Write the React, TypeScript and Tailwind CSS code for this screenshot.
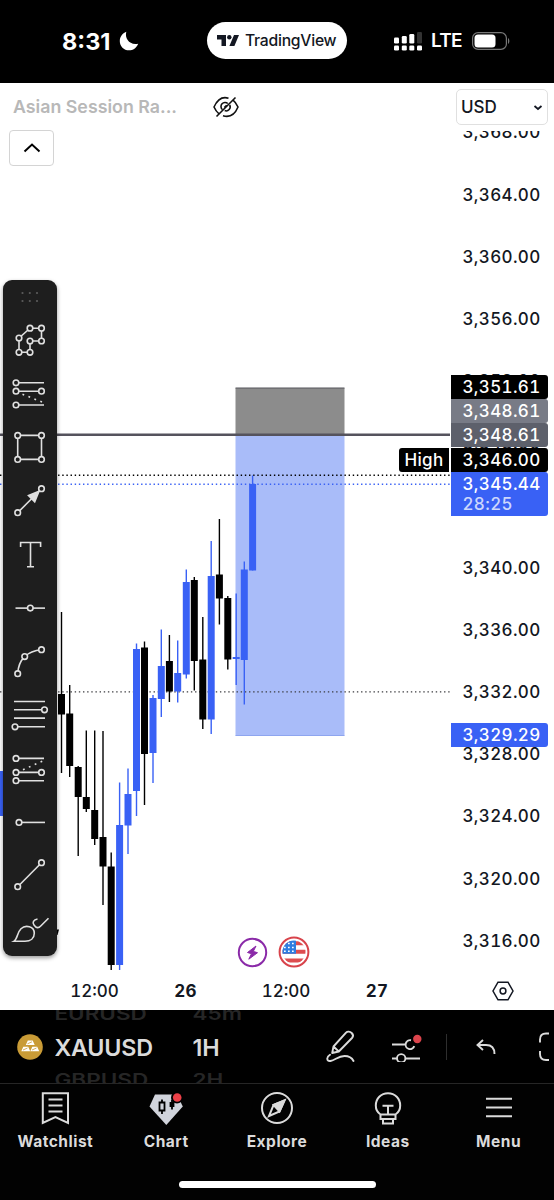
import type { ReactNode } from "react";
import { clsx } from "clsx";

const UP = "#3961f5";
const DOWN = "#000000";

// x, high, body top, body bottom, low, rising
type Candle = [number, number, number, number, number, boolean];

const candles: Candle[] = [
  [61.5, 612, 694, 714.5, 773, false],
  [69.7, 685, 713.5, 766, 777, false],
  [78.2, 766, 767, 797, 856, false],
  [86.3, 730.5, 797, 809, 812, false],
  [94.7, 730.5, 810, 839, 845, false],
  [103, 731, 837, 866.5, 905, false],
  [111.2, 852.5, 866.5, 965, 970, false],
  [119.6, 782.5, 825, 965, 970, true],
  [128, 768.5, 794, 825.5, 854, true],
  [136.5, 643.5, 649, 791, 816, true],
  [144.5, 641.5, 647.5, 754, 805, false],
  [153, 695, 698, 753, 783, true],
  [161.3, 629.5, 666, 699, 717, true],
  [169.4, 635, 661, 691.5, 702, false],
  [177.7, 640.5, 673, 691.5, 702.5, true],
  [186.3, 569.5, 582, 674.5, 678.5, true],
  [194.3, 577, 580, 661, 690.5, false],
  [202.8, 617, 659.5, 719.5, 729, false],
  [211.2, 541, 576, 719.5, 734, true],
  [219.4, 519, 574.5, 598.5, 624.5, false],
  [227.8, 596, 598, 659.5, 669.5, false],
  [236.2, 593.5, 657, 659, 685, true],
  [244.3, 561.5, 569.5, 660, 704.5, true],
  [252.6, 475.5, 484, 570.5, 570.5, true],
];

const ticks = [
  "3,368.00", "3,364.00", "3,360.00", "3,356.00", "3,352.00", "3,348.00", "3,344.00",
  "3,340.00", "3,336.00", "3,332.00", "3,328.00", "3,324.00", "3,320.00", "3,316.00",
];

function Dot({ x, y }: { x: number; y: number }) {
  return <circle cx={x} cy={y} r="2.8" fill="#1e1e1e" />;
}

const tools: ReactNode[] = [
  <>
    <path d="M16-2.7 27-12.5H38.5V.3H27V11.6H16Z" />
    <Dot x={16} y={-2.7} />
    <Dot x={27} y={-12.5} />
    <Dot x={38.5} y={-12.5} />
    <Dot x={38.5} y={0.3} />
    <Dot x={27} y={0.3} />
    <Dot x={27} y={11.6} />
    <Dot x={16} y={11.6} />
  </>,
  <>
    <path d="M13-10.9H41M13-2.5H38.5M13 11.3H41" />
    <path d="M19.5.5 39.5 8.5" strokeDasharray="1.8 4.6" />
    <Dot x={13} y={-10.9} />
    <Dot x={13} y={-2.5} />
    <Dot x={38.5} y={-2.5} />
    <Dot x={13} y={11.3} />
  </>,
  <>
    <path d="M14.7-12.3H38.5V11.7H14.7Z" />
    <Dot x={14.7} y={-12.3} />
    <Dot x={38.5} y={-12.3} />
    <Dot x={38.5} y={11.7} />
    <Dot x={14.7} y={11.7} />
  </>,
  <>
    <path d="M14.7 12 38.5-12" />
    <path d="M36-9.5 25.5-5.2 31.7 1Z" fill="#e0e0e0" />
    <Dot x={14.7} y={12} />
    <Dot x={38.5} y={-12} />
  </>,
  <path d="M17.6-7.7V-12.2H37.6V-7.7M27.5-12.2V12M24 12H31" />,
  <>
    <path d="M12.5.4H42" />
    <Dot x={27.3} y={0.4} />
  </>,
  <>
    <path d="M14.7 12C15 5 17.5-1 21.7-5.1S31-11.3 38.5-12" />
    <Dot x={14.7} y={12} />
    <Dot x={21.7} y={-5.1} />
    <Dot x={38.5} y={-12} />
  </>,
  <>
    <path d="M11-13.2H42M11-4.9H42M11 3.4H42M11 12.1H42" />
    <Dot x={41.5} y={-4.9} />
    <Dot x={12} y={12.1} />
  </>,
  <>
    <path d="M13-10.3H41M13 3.7H38.5M13 12H41" />
    <path d="M20 1 40-7.8" strokeDasharray="1.8 4.6" />
    <Dot x={13} y={-10.3} />
    <Dot x={13} y={3.7} />
    <Dot x={38.5} y={3.7} />
    <Dot x={13} y={12} />
  </>,
  <>
    <path d="M16 .7H42" />
    <Dot x={16} y={0.7} />
  </>,
  <>
    <path d="M14.7 12 38.5-12" />
    <Dot x={14.7} y={12} />
    <Dot x={38.5} y={-12} />
  </>,
  <>
    <path d="M10.8 12.6C15 10 13.8 4 18 0 22.5-4.300 31.300-2.500 31.300 4.500 31.300 9.500 27.500 12.600 22 12.600Z" />
    <path d="M34.500-9.700C30.500-9 29-6.300 31-3.800 33.500-.2 35.500-.4 38-3L45.500-10.500" />
  </>,
];

function Toolbar() {
  return (
    <aside className="absolute left-[3px] top-[149px] h-[676px] w-[53.5px] rounded-[9px] bg-[#1e1e1e] shadow-[0_2px_4px_rgba(0,0,0,0.4)]">
      <svg viewBox="0 0 54 34" className="block h-[34px] w-[54px]" fill="#5c5c5c">
        {[13, 21].map((y) =>
          [19.5, 26.8, 34].map((x) => <circle key={`${x}-${y}`} cx={x} cy={y} r="1.1" />),
        )}
      </svg>
      {tools.map((tool, i) => (
        <svg
          key={i}
          viewBox="0 -26.725 54 53.45"
          className="block h-[53.45px] w-[54px]"
          fill="none"
          stroke="#e0e0e0"
          strokeWidth="1.6"
        >
          {tool}
        </svg>
      ))}
    </aside>
  );
}

function Plot() {
  return (
    <svg viewBox="0 131 450 839" className="block h-[839px] w-[450px]">
      <rect x="0" y="771" width="4" height="45" fill={UP} />
      <path d="M57 929.5h2l-1.5 5.5h-1z" />
      <rect x="235.5" y="388" width="109" height="46" fill="#8c8c8c" />
      <path d="M235.5 388h109" stroke="#55555a" />
      <rect x="235.5" y="434" width="109" height="301.5" fill="#a9bcf9" />
      <path d="M235.5 735.5h109" stroke="#8ea5ef" />
      <path d="M0 434.7H450" stroke="#55535d" strokeWidth="2.4" />
      <path d="M0 475.3H450" stroke="#000" strokeWidth="1.4" strokeDasharray="1.4 2.75" />
      <path d="M0 484.3H450" stroke={UP} strokeWidth="1.4" strokeDasharray="1.4 2.75" />
      <path d="M0 691.8H450" stroke="#3c3c40" strokeWidth="1.3" strokeDasharray="1.4 2.75" />
      {candles.map(([x, high, top, bottom, low, rising]) => (
        <g key={x} fill={rising ? UP : DOWN}>
          <rect x={x - 0.7} y={high} width="1.4" height={low - high} />
          <rect x={x - 3.5} y={top} width="7" height={bottom - top} />
        </g>
      ))}
      <circle cx="252.5" cy="952.5" r="13.7" fill="#fff" stroke="#8a2aa8" strokeWidth="2" />
      <path
        d="m256 946-8.500 6.500 4 1.200-2.700 5.500 8.700-6.500-4.200-1.300z"
        fill="#8a2aa8"
        stroke="#8a2aa8"
        strokeLinejoin="round"
      />
      <clipPath id="flag">
        <circle cx="294" cy="952" r="11.5" />
      </clipPath>
      <circle cx="294" cy="952" r="14.4" fill="#fff" stroke="#d8434b" strokeWidth="2" />
      <g clipPath="url(#flag)">
        <path d="M282 943.2h24M282 951.8h24M282 960.5h24" stroke="#dd4d50" strokeWidth="4" />
        <path d="M282 940h14v13.8h-14z" fill="#2f7de0" />
        <path d="M284 943.5h12M284 947.5h12M284 951.3h12" stroke="#fff" strokeWidth="1.5" strokeDasharray="1.7 2.3" />
      </g>
    </svg>
  );
}

function PriceTag({ className, children }: { className: string; children: ReactNode }) {
  return (
    <div
      className={clsx(
        "absolute left-[1px] w-[97px] rounded-r-[3px] pl-[11.5px] text-[17px] font-medium leading-6 tracking-[0.35px] text-white",
        className,
      )}
    >
      {children}
    </div>
  );
}

function PriceAxis() {
  return (
    <div className="relative h-[839px] w-[104px] overflow-hidden tabular-nums">
      <div className="-mt-[29px] pl-[12.5px] text-[17px] font-medium tracking-[0.35px] text-[#131722]">
        {ticks.map((tick) => (
          <div key={tick} className="flex h-[62.2px] items-center">
            {tick}
          </div>
        ))}
      </div>
      <PriceTag className="top-[244px] h-6 bg-black">3,351.61</PriceTag>
      <PriceTag className="top-[268px] h-6 bg-[#787b86]">3,348.61</PriceTag>
      <PriceTag className="top-[292px] h-6 bg-[#5d606b]">3,348.61</PriceTag>
      <PriceTag className="top-[317px] h-6 bg-black">3,346.00</PriceTag>
      <PriceTag className="top-[341px] h-[44px] bg-[#3961f5]">
        3,345.44
        <div className="-mt-[4px] text-white/75">28:25</div>
      </PriceTag>
      <PriceTag className="top-[592px] h-6 bg-[#3961f5]">3,329.29</PriceTag>
    </div>
  );
}

function StatusBar() {
  return (
    <header className="flex h-[83px] items-start bg-black pt-[22px] text-white">
      <div className="flex h-[37px] w-[207px] items-center gap-[5px] pl-[62px]">
        <span className="w-[52px] pt-[2px] text-[23.5px] font-bold tracking-normal">8:31</span>
        <svg viewBox="0 0 20 20" className="size-5" fill="#fff">
          <path d="M7.300.8C5.500 7.500 10.500 14.500 19.200 12.700 17.500 17 14 19.300 10 19.300 4.800 19.300.8 15.300.8 10.200.8 6 3.300 2.300 7.300.8Z" />
        </svg>
      </div>
      <div className="flex h-[37px] w-[140px] items-center rounded-full bg-white pl-[10px] text-[#131722]">
        <svg viewBox="0 0 22 11" className="h-[11px] w-[22px]" fill="#131722">
          <path d="M0 0h9v11H4.500V4.500H0zM17 0h5l-4.600 11h-5z" />
          <circle cx="12.3" cy="2.3" r="2.2" />
        </svg>
        <span className="ml-[6px] text-[15.7px] font-medium tracking-[-0.25px]">TradingView</span>
      </div>
      <div className="flex h-[37px] items-center pl-[47px] pt-px">
        <svg viewBox="0 0 28 20" className="h-5 w-7" fill="#fff">
          <rect x="0" y="6.5" width="5" height="6" rx="1.3" />
          <rect x="7.8" y="5" width="5" height="7.5" rx="1.3" />
          <rect x="15.3" y="3" width="5" height="9.5" rx="1.3" />
          <rect x="23" y="1" width="5" height="11.5" rx="1.3" fill="#333" />
          <rect x="0" y="14.5" width="5" height="5" rx="1.3" />
          <rect x="7.8" y="14.5" width="5" height="5" rx="1.3" />
          <rect x="15.3" y="14.5" width="5" height="5" rx="1.3" />
          <rect x="23" y="14.5" width="5" height="5" rx="1.3" />
        </svg>
        <span className="ml-[9px] w-[41px] pt-px text-[19px] font-semibold tracking-[-0.7px]">LTE</span>
        <svg viewBox="0 0 38 18" className="h-[18px] w-[38px]">
          <rect x=".6" y=".6" width="33.8" height="16.8" rx="5.5" fill="none" stroke="#777" strokeWidth="1.2" />
          <rect x="2.5" y="2.5" width="21" height="13" rx="3.5" fill="#fff" />
          <path d="M36 6v6c1.800-.8 1.800-5.200 0-6z" fill="#777" />
        </svg>
      </div>
    </header>
  );
}

function ChartPanel() {
  return (
    <main className="h-[927px] bg-white">
      <div className="flex h-12 items-start">
        <span className="w-[200px] pl-[13px] pt-[10px] text-[17.8px] font-semibold leading-7 text-[#b8b8b8]">
          Asian Session Ra...
        </span>
        <svg viewBox="0 0 26 22" className="ml-[13px] mt-[13px] h-[22px] w-[26px]" fill="none" stroke="#111" strokeWidth="1.6">
          <path d="M15.500 2.200C8-.2 3.500 5.500 1 11c1.300 2.900 3.200 5.500 5.300 7.200M10 19.800c8 2.400 12.700-3.300 15-8.800-1.300-2.900-3-5.500-5.200-7.200" />
          <path d="M9.300 13.500a4 4 0 0 1 5.500-6M11.700 14.600a4 4 0 0 0 5-5.600M11.300 11.500l2.300-2.300M3.500 20.500 22.500 1.500" />
        </svg>
        <button
          type="button"
          className="ml-[217px] mt-[6px] flex h-9 w-[92px] items-center justify-between rounded-[5px] border border-[#e0e0e0] pl-[4px] pr-[4px] pt-px text-[17px] font-medium text-[#131722]"
        >
          USD
          <svg viewBox="0 0 10 6" className="h-[6px] w-[10px]" fill="none" stroke="#131722" strokeWidth="1.8">
            <path d="m1.500 1 3.500 3 3.500-3" />
          </svg>
        </button>
      </div>
      <div className="relative flex">
        <Plot />
        <PriceAxis />
        <button
          type="button"
          className="absolute -top-px left-[9px] flex h-9 w-[45px] items-center justify-center rounded-[4px] border border-[#d4d4d4] bg-white"
        >
          <svg viewBox="0 0 18 10" className="h-[10px] w-[18px]" fill="none" stroke="#000" strokeWidth="2">
            <path d="m1.500 8.500 7.500-7 7.500 7" />
          </svg>
        </button>
        <span className="absolute left-[399px] top-[317px] h-6 w-[50px] rounded-l-[3px] bg-black text-center text-[17px] font-medium leading-6 tracking-[0.3px] text-white">
          High
        </span>
        <Toolbar />
      </div>
      <div className="flex h-10 items-center pl-[49px] pt-[3px] text-center text-[17px] font-medium tabular-nums text-[#131722]">
        <span className="w-[91px]">12:00</span>
        <span className="w-[91px] font-bold tracking-[0.3px]">26</span>
        <span className="w-[110px]">12:00</span>
        <span className="w-[72px] font-bold tracking-[0.3px]">27</span>
        <svg viewBox="0 0 22 20" className="-mt-[2px] ml-[79px] h-5 w-[22px]" fill="none" stroke="#131722" strokeWidth="1.5">
          <path d="M6 1.200h10L21 10l-5 8.800H6L1 10Z" />
          <circle cx="11" cy="10" r="2.9" />
        </svg>
      </div>
    </main>
  );
}

function Wheel({ items, className }: { items: [string, string, string]; className: string }) {
  return (
    <div className={clsx("flex h-[73px] flex-col overflow-hidden", className)}>
      <span className="-mt-[8px] h-6 shrink-0 origin-center scale-y-[0.75] text-[22.5px] font-semibold leading-6 text-[#262626]">
        {items[0]}
      </span>
      <span className="mt-[8px] h-7 shrink-0 text-[23.3px] font-semibold leading-7 tracking-[-0.2px] text-[#dbdbdb]">
        {items[1]}
      </span>
      <span className="mt-[6px] h-6 shrink-0 origin-center scale-y-[0.75] text-[22.5px] font-semibold leading-6 text-[#262626]">
        {items[2]}
      </span>
    </div>
  );
}

function SymbolBar() {
  return (
    <div className="flex h-[73px] items-center overflow-hidden bg-black">
      <svg viewBox="0 0 26 26" className="ml-[16.5px] size-[26px] shrink-0" fill="#fff">
        <circle cx="13" cy="13" r="12.8" fill="#c99b36" />
        <path d="M10.800 6.500h4.900l2 4.600H8.800zM6.300 12.700h4.900l2 4.600H4.300zM15.300 12.700h4.900l2 4.600h-8.900z" />
        <path d="m10.500 9.800 4.500-2M6 16l4.500-2M15 16l4.500-2" stroke="#c99b36" strokeWidth=".8" />
      </svg>
      <Wheel items={["EURUSD", "XAUUSD", "GBPUSD"]} className="ml-[12px] w-[138px] shrink-0" />
      <Wheel items={["45m", "1H", "2H"]} className="w-[133px] shrink-0" />
      <svg
        viewBox="0 0 30 34"
        className="h-[34px] w-[30px] shrink-0"
        fill="none"
        stroke="#dbdbdb"
        strokeWidth="1.9"
        strokeLinejoin="round"
        strokeLinecap="round"
      >
        <path d="M6.200 23 7.500 16.500 19.800 2.800C21.500 1 24 1.400 25.700 3 27.300 4.600 27.400 6.500 26 8L12.800 21.500 6.200 23ZM7.500 16.500l5.300 5" />
        <path d="M4 24.800C-.3 27.500 1 31.500 4.500 31c5-1 7.500-5 14-5 4.500 0 7.500 2 9 5" />
      </svg>
      <svg viewBox="0 0 32 30" className="ml-[35px] h-[30px] w-8 shrink-0" fill="none" stroke="#dbdbdb" strokeWidth="1.9">
        <path d="M1 12.500h13.500M20 8.200a4.500 4.500 0 1 0 3.300 6M1 26.500h5M14.500 26.500H29" />
        <circle cx="10.2" cy="26.3" r="4.2" />
        <circle cx="26.3" cy="7" r="4.2" fill="#dc444c" stroke="none" />
      </svg>
      <span className="ml-[23px] h-[26px] w-px shrink-0 bg-[#2e2e2e]" />
      <svg viewBox="0 0 20 16" className="ml-[29px] h-4 w-5 shrink-0" fill="none" stroke="#dbdbdb" strokeWidth="1.9">
        <path d="M7 1 1.500 6 7 11M1.500 6H10c5 0 8.500 3 8.500 9" />
      </svg>
      <svg viewBox="0 0 12 30" className="ml-[42px] h-[30px] w-3 shrink-0" fill="none" stroke="#dbdbdb" strokeWidth="1.9">
        <path d="M11 1.500H8c-4 0-6 2-6 6v3M11 28H8c-4 0-6-2-6-6v-3" />
      </svg>
    </div>
  );
}

// icons share a 36x34 box
const navItems: { label: string; icon: ReactNode }[] = [
  { label: "Watchlist", icon: <path d="M5.800 2.200H31V32L18.400 26 5.800 32ZM11.500 8.500h14M11.500 14.500h14M11.500 20.500h14" /> },
  {
    label: "Chart",
    icon: (
      <>
        <path d="M7 3.500H29L34.800 15.500 18.300 34 1.500 15.500Z" fill="#d1d4dc" stroke="none" />
        <path d="M11.500 11.500h5v8h-5zM14 8.500v3M14 19.500v3.500M24 9v9.500M22.500 12h3v3h-3z" stroke="#000" strokeWidth="1.8" />
        <circle cx="29" cy="6.5" r="6" fill="#000" stroke="none" />
        <circle cx="29.2" cy="6.5" r="4.3" fill="#ec4048" stroke="none" />
      </>
    ),
  },
  {
    label: "Explore",
    icon: (
      <>
        <circle cx="18" cy="17" r="15" />
        <path d="M25.500 9.500 14.500 14 10 25 20.500 20.500Z" />
        <path d="M25.500 9.500 14.500 14 20.500 20.500Z" fill="#dbdbdb" />
      </>
    ),
  },
  {
    label: "Ideas",
    icon: (
      <path d="M10.500 23.500C7.500 21.500 5.800 18.500 5.800 14.500 5.800 7.500 11 2.200 18 2.200S30.200 7.500 30.200 14.500C30.200 18.500 28.500 21.500 25.500 23.500V28h-15ZM10.500 23.500h15M13 28h10v4.500H13ZM12.500 14.700h11M18 14.700v8.800" />
    ),
  },
  { label: "Menu", icon: <path d="M5 7.800H31M5 16.500H31M5 25.200H31" /> },
];

function TabBar() {
  return (
    <nav className="flex h-[117px] flex-col items-center border-t border-[#262626] bg-[#020202]">
      <div className="grid h-[97px] w-full grid-cols-5">
        {navItems.map(({ label, icon }) => (
          <div key={label} className="flex flex-col items-center pt-[7px]">
            <svg viewBox="0 0 36 34" className="h-[34px] w-9" fill="none" stroke="#dbdbdb" strokeWidth="2">
              {icon}
            </svg>
            <span className="mt-[5px] text-[15.5px] font-bold leading-6 tracking-[0.5px] text-[#dbdbdb]">{label}</span>
          </div>
        ))}
      </div>
      <span className="h-[7px] w-[197px] rounded-full bg-white" />
    </nav>
  );
}

export default function App() {
  return (
    <div className="h-[1200px] w-[554px] overflow-hidden bg-black font-['Inter','Liberation_Sans',sans-serif]">
      <StatusBar />
      <ChartPanel />
      <SymbolBar />
      <TabBar />
    </div>
  );
}
